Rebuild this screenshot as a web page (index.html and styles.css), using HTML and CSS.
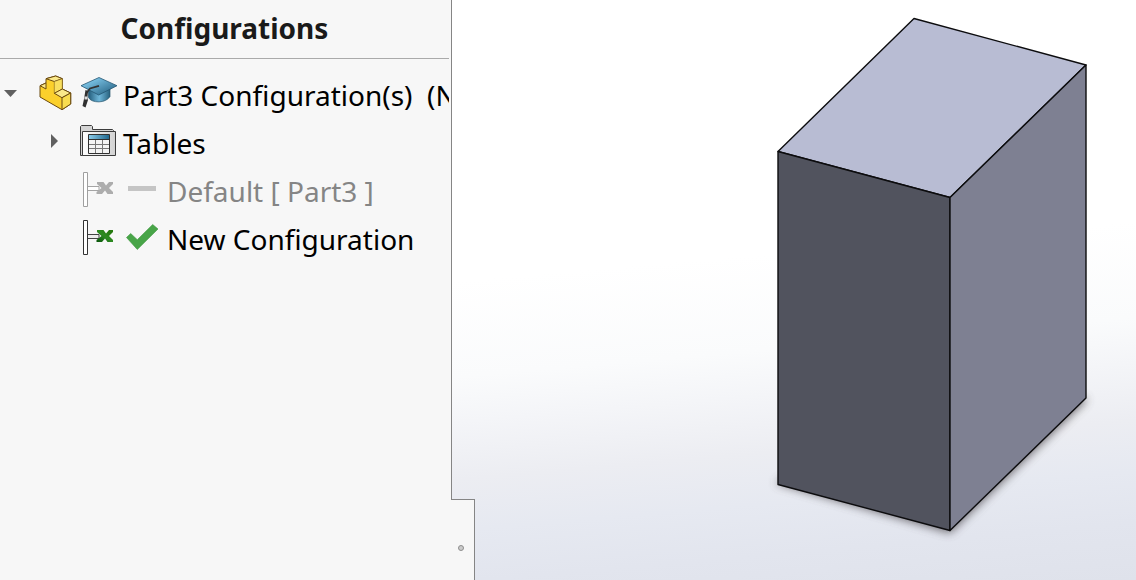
FILE: index.html
```html
<!DOCTYPE html>
<html lang="en">
<head>
    <meta charset="utf-8">
    <title>Configurations</title>
    <link rel="stylesheet" href="styles.css">
</head>
<body>
    <aside class="panel">
        <h1>Configurations</h1>
        <ul class="tree">
            <li class="row">
                <button class="toggle" type="button" aria-label="Collapse Part3">
                    <svg width="14" height="8" viewBox="0 0 14 8"><path d="M0 1h13L6.5 8z" fill="#606060"/></svg>
                </button>
                <svg class="icon" viewBox="0 0 40 40" stroke="#6b4a10" stroke-width="1" stroke-linejoin="round">
                    <path d="M2 12.7L8 10V5.7L17.7 3l6.6 2.7V16l8.4 4v11L24 36.7 2 24z" fill="#fbd02c"/>
                    <path d="M8 5.7L17.7 3l6.6 2.7-8 2.8z" fill="#fbe98a"/>
                    <path d="M2 12.7L8 10v6z" fill="#fbe98a"/>
                    <path d="M16.3 8.5l8-2.8V16l-8 4.3z" fill="#f8df60" stroke-width=".5"/>
                    <path d="M16.3 20.3l8-4.3 8.4 4-8.7 4.7z" fill="#fbe98a"/>
                    <path d="M24 24.7l8.7-4.7v11L24 36.7z" fill="#f8dc50"/>
                </svg>
                <svg class="icon" viewBox="0 0 40 40">
                    <defs>
                        <linearGradient id="cap" x1="0" y1="0" x2="1" y2="1">
                            <stop offset=".2" stop-color="#7cc4e6"/>
                            <stop offset="1" stop-color="#1d5879"/>
                        </linearGradient>
                        <linearGradient id="capBase">
                            <stop offset="0" stop-color="#235d7c"/>
                            <stop offset=".5" stop-color="#6fb7da"/>
                            <stop offset="1" stop-color="#28627f"/>
                        </linearGradient>
                    </defs>
                    <path d="M10.5 16v8.5c3 6 17.5 6 21.5-1V15z" fill="url(#capBase)" stroke="#28566f" stroke-width=".7"/>
                    <path d="M3 12.7L21 4.5l18 8.2L20.7 22z" fill="url(#cap)" stroke="#235672" stroke-width=".8"/>
                    <path d="M21 12.8L12 15.5 8.5 20" fill="none" stroke="#333" stroke-width="1.8"/>
                    <path d="M7.5 17l2.5 1-.5 6 .5 3-2.5 7.5-3-1.5 1.5-7z" fill="#303030"/>
                    <path d="M6.5 23.5h3v3h-3z" fill="#ddd"/>
                </svg>
                <span class="label">Part3 Configuration(s)&nbsp; (New Configuration)</span>
            </li>
            <li class="row child">
                <button class="toggle" type="button" aria-label="Expand Tables">
                    <svg class="closed" width="8" height="14" viewBox="0 0 8 14"><path d="M0 0v14l7-7z" fill="#606060"/></svg>
                </button>
                <svg class="icon" viewBox="0 0 40 40">
                    <defs>
                        <linearGradient id="folder">
                            <stop offset="0" stop-color="#fff"/>
                            <stop offset="1" stop-color="#d2d2d2"/>
                        </linearGradient>
                        <linearGradient id="head">
                            <stop offset="0" stop-color="#8ccdeb"/>
                            <stop offset="1" stop-color="#1f668c"/>
                        </linearGradient>
                    </defs>
                    <path d="M2.5 34.5V5.5l1-1h10l1 1v3h20l1 1v25z" fill="#d4d4d4" stroke="#3c3c3c"/>
                    <path d="M4.5 10.5h33v24h-33z" fill="url(#folder)" stroke="#3c3c3c"/>
                    <path d="M10.5 13.5h21v19h-21z" fill="#f4f4f4"/>
                    <path d="M10.5 13.5h21v4.5h-21z" fill="url(#head)"/>
                    <path d="M17.5 18.5v14m7-14v14M10.500 23.500h21m-21 4h21" stroke="#777" fill="none"/>
                    <path d="M10.5 13.5h21v19h-21zm0 5h21" fill="none" stroke="#303030"/>
                </svg>
                <span class="label">Tables</span>
            </li>
            <li class="row config inactive">
                <svg class="icon" viewBox="0 0 40 40">
                    <path d="M9.5 17.5H21v4H9.5z" fill="#fff" stroke="#a5a5a5"/>
                    <path d="M5.5 3.5h4v34h-4z" fill="#fff" stroke="#a0a0a0"/>
                    <path d="M19 13h6.5l2.5 3.5 3-3.5h4v2l-4 4 4 4v2h-5.500L27 21.500 24 25h-5.500v-2l5-4-4.500-4z" fill="#adadad"/>
                </svg>
                <svg class="icon status" viewBox="0 0 40 40"><path d="M6 17h28v5H6z" fill="#c5c5c5"/></svg>
                <span class="label">Default [ Part3 ]</span>
            </li>
            <li class="row config">
                <svg class="icon" viewBox="0 0 40 40">
                    <defs>
                        <linearGradient id="cross" x1="0" y1="1" x2="1" y2="0">
                            <stop offset="0" stop-color="#07530a"/>
                            <stop offset=".5" stop-color="#2e8b22"/>
                            <stop offset=".8" stop-color="#267a10"/>
                        </linearGradient>
                    </defs>
                    <path d="M9.5 17.5H21v4H9.5z" fill="#eee" stroke="#444"/>
                    <path d="M5.5 3.5h4v34h-4z" fill="#fff" stroke="#333"/>
                    <path d="M19 13h6.5l2.5 3.5 3-3.5h4v2l-4 4 4 4v2h-5.500L27 21.500 24 25h-5.500v-2l5-4-4.500-4z" fill="url(#cross)"/>
                </svg>
                <svg class="icon status" viewBox="0 0 40 40"><path d="M4.5 20.5l4.200-4 6.600 6.200L30.700 7.500l5.300 4.500-20.700 20.500z" fill="#48a548" stroke="#3c953e" stroke-width=".6"/></svg>
                <span class="label">New Configuration</span>
            </li>
        </ul>
        <div class="splitter"><span class="grip"></span></div>
    </aside>

    <main class="viewport">
        <svg class="model" width="360" height="560" viewBox="0 0 360 560" role="img" aria-label="Part3">
            <defs>
                <filter id="soft" x="-10%" y="-10%" width="120%" height="120%"><feGaussianBlur stdDeviation="5"/></filter>
            </defs>
            <!-- ground shadow -->
            <path d="M25 483l175 50 138-134-100-20z" fill="#59545a" opacity=".85" filter="url(#soft)"/>
            <g stroke="#0c0c0e" stroke-width="1.4" stroke-linejoin="round">
                <path d="M28 151.500L164 18.500 336 65 200 197.500z" fill="#b8bcd3"/>
                <path d="M28 151.500L200 197.500v333L28 484.500z" fill="#51535e"/>
                <path d="M200 197.500L336 65v333L200 530.500z" fill="#7e8092"/>
            </g>
        </svg>
    </main>
</body>
</html>
```
FILE: styles.css
```css
* {
    box-sizing: border-box;
}

body {
    margin: 0;
    display: flex;
    min-height: 100vh;
    font-family: "Noto Sans", "Open Sans", sans-serif;
    color: #000;
    overflow: hidden;
}

.panel {
    position: relative;
    flex: 0 0 452px;
    min-width: 0;
    padding-right: 2px;
    background: #f7f7f7;
    border-right: 1px solid #858585;
}

h1 {
    margin: 0;
    height: 59px;
    line-height: 56px;
    font-size: 28px;
    font-weight: 700;
    color: #1a1a1a;
    text-align: center;
    border-bottom: 1px solid #aaa;
}

.tree {
    list-style: none;
    margin: 0;
    padding: 10px 0 0;
    overflow: hidden;
}

.row {
    display: flex;
    align-items: center;
    height: 48px;
}

.child {
    padding-left: 40px;
}

.config {
    padding-left: 78px;
}

.toggle {
    flex: none;
    display: flex;
    align-items: center;
    width: 38px;
    height: 40px;
    padding: 0 0 0 4px;
    border: 0;
    background: none;
}

.closed {
    margin-left: 7px;
}

.icon {
    flex: none;
    width: 40px;
    height: 40px;
}

.status {
    margin-left: 4px;
}

.label {
    margin-left: 5px;
    padding-top: 4px;
    font-size: 28px;
    line-height: 40px;
    white-space: nowrap;
}

.inactive {
    color: #858585;
}

/* tab at the bottom of the panel, hangs over the viewport */
.splitter {
    position: absolute;
    left: 100%;
    bottom: 0;
    width: 24px;
    height: 81px;
    background: #f7f7f7;
    border-top: 1px solid #858585;
    border-right: 1px solid #858585;
}

.splitter::before {
    content: "";
    position: absolute;
    top: 0;
    bottom: 0;
    left: -1px;
    width: 1px;
    background: #f7f7f7;
}

.grip {
    position: absolute;
    left: 7px;
    top: 45px;
    width: 6px;
    height: 6px;
    border: 1px solid #8e8e8e;
    border-radius: 50%;
    background: #ccc;
}

.viewport {
    flex: 1;
    min-width: 0;
    display: flex;
    justify-content: flex-end;
    padding-right: 26px;
    background: linear-gradient(175deg, #fff 44%, #fafbfc 59%, #f4f5f8 66%, #ecedf2 75%, #e6e9f1 83%, #e2e5ee 91%, #dfe2eb 100%);
}
```
